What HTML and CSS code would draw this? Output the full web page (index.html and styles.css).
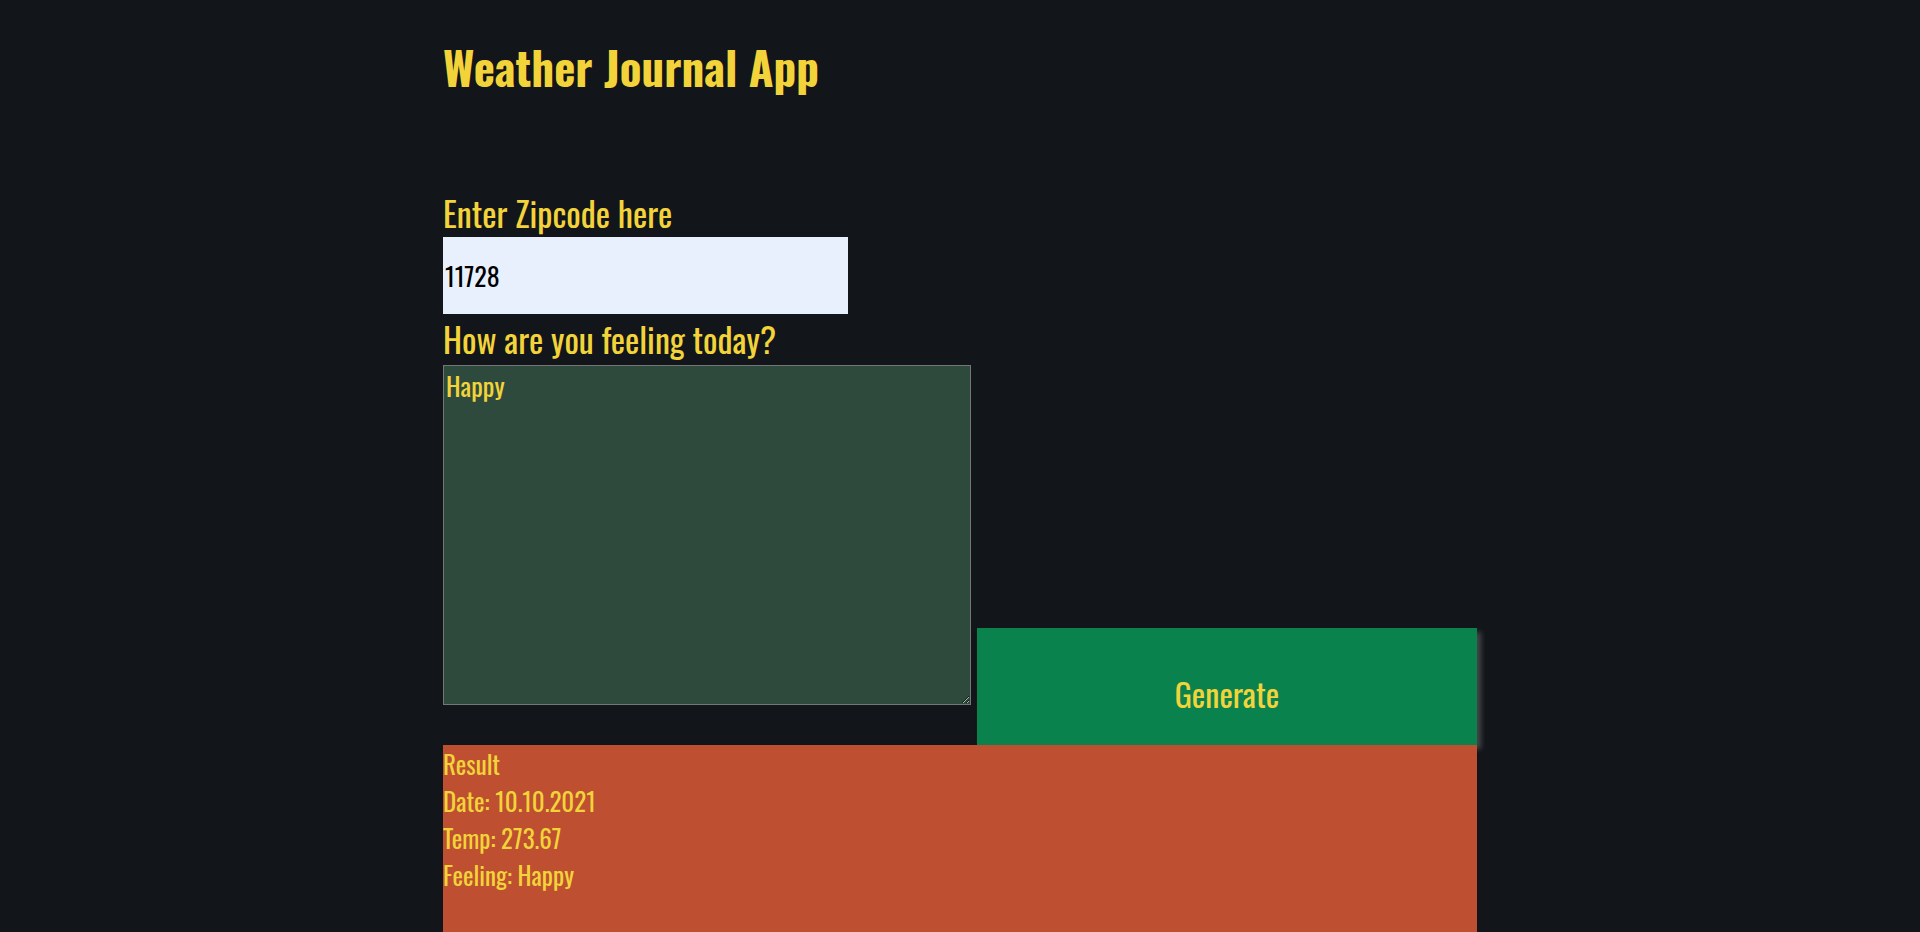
FILE: index.html
```html
<!DOCTYPE html>
<html lang="en">
<head>
<meta charset="utf-8">
<title>Weather Journal App</title>
<link rel="stylesheet" href="styles.css">
</head>
<body>
<div class="app">
  <h1 class="title">Weather Journal App</h1>
  <div class="entry">
    <div class="form-col">
      <label class="label label-zip" for="zip">Enter Zipcode here</label>
      <input class="zip" id="zip" type="text" value="11728">
      <label class="label label-feel" for="feelings">How are you feeling today?</label>
      <textarea class="feelings" id="feelings">Happy</textarea>
    </div>
    <button class="generate" type="button">Generate</button>
  </div>
  <div class="result">
    <div class="result-line">Result</div>
    <div class="result-line">Date: 10.10.2021</div>
    <div class="result-line">Temp: 273.67</div>
    <div class="result-line">Feeling: Happy</div>
  </div>
</div>
</body>
</html>
```
FILE: styles.css
```css
html, body {
  margin: 0;
  padding: 0;
  background: #12161a;
}
body {
  font-family: "Oswald", "Open Sans", sans-serif;
  color: #f2d43a;
  overflow: hidden;
}
.app {
  width: 1034px;
  margin: 0 auto;
}
.title {
  margin: 0;
  padding-top: 32px;
  height: 189px;
  box-sizing: border-box;
  font-size: 45px;
  line-height: 70px;
  font-weight: 700;
}
.entry {
  display: flex;
  align-items: flex-end;
  gap: 6px;
}
.form-col {
  display: flex;
  flex-direction: column;
  align-items: flex-start;
  padding-bottom: 40px;
}
.label {
  font-size: 34px;
  line-height: 48px;
  display: block;
}
.label-zip {
  height: 48px;
}
.label-feel {
  height: 51px;
  line-height: 50px;
}
.zip {
  width: 405px;
  height: 77px;
  box-sizing: border-box;
  border: none;
  padding: 0 2px;
  margin: 0;
  background: #e8f0fe;
  color: #000;
  font-family: "Oswald", sans-serif;
  font-size: 26px;
  outline: none;
}
.feelings {
  width: 528px;
  height: 340px;
  box-sizing: border-box;
  margin: 0;
  border: 1px solid #767676;
  padding: 2px;
  background: #2e4a3c;
  color: #f2d43a;
  font-family: "Oswald", sans-serif;
  font-size: 26px;
  line-height: 36px;
  resize: both;
  outline: none;
}
.generate {
  width: 500px;
  height: 117px;
  border: none;
  margin: 0;
  padding: 14px 0 0;
  background: #09824e;
  color: #f2d43a;
  font-family: "Oswald", sans-serif;
  font-size: 32px;
  box-shadow: 4px 4px 5px rgba(130, 130, 130, 0.45);
  cursor: pointer;
}
.result {
  position: relative;
  background: #be4f30;
  height: 240px;
  padding-top: 0;
  font-size: 25px;
}
.result-line {
  line-height: 37px;
}
```
